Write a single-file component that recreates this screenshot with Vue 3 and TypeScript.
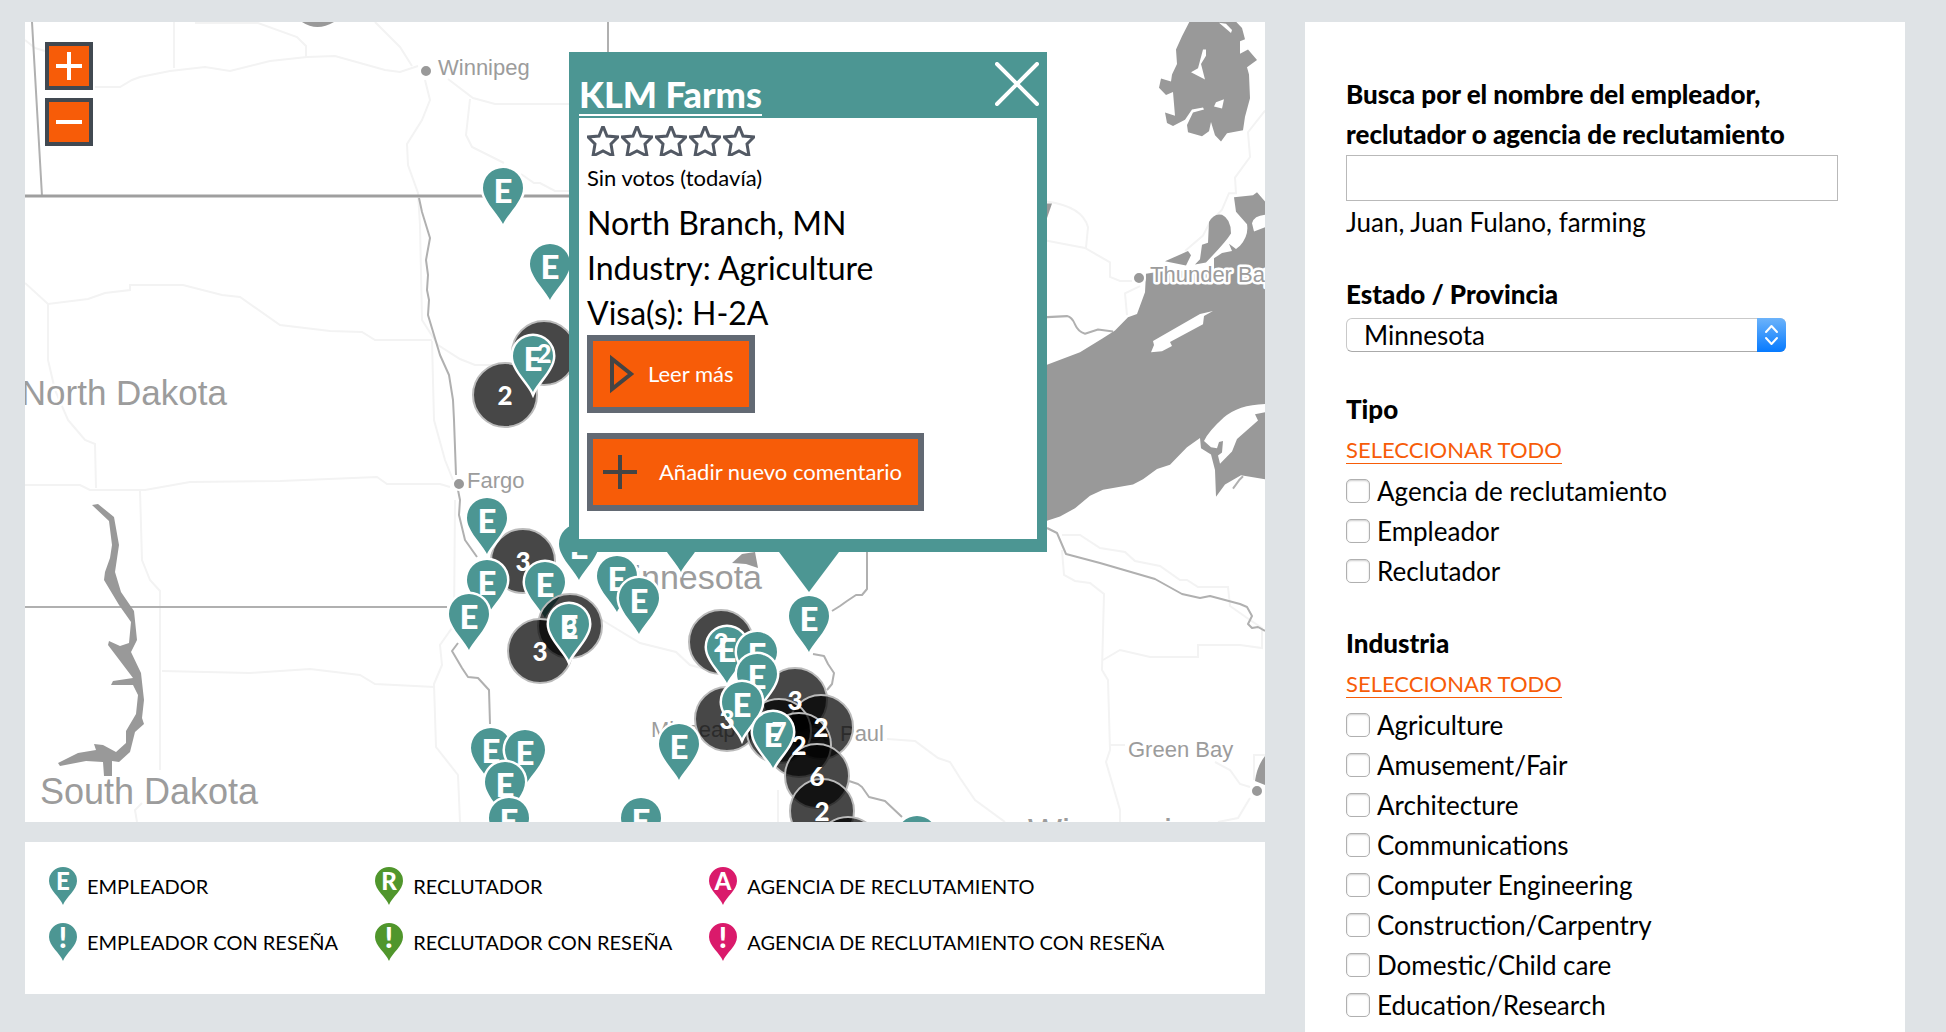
<script setup lang="ts">
import { ref } from 'vue'

interface Pin { kind: 'pin'; x: number; y: number }
interface Cluster { kind: 'cluster'; x: number; y: number; n: number; under?: boolean }
type Marker = Pin | Cluster

const pin = (x: number, y: number): Pin => ({ kind: 'pin', x, y })
const cluster = (x: number, y: number, n: number, under = false): Cluster => ({ kind: 'cluster', x, y, n, under })

// Markers are listed back to front; cluster counts lie over all of them unless marked as under.
const markers: Marker[] = [
  pin(503, 224),
  pin(550, 300),
  cluster(544, 353, 2),
  cluster(505, 395, 2),
  pin(533, 392),
  cluster(523, 561, 3, true),
  pin(487, 554),
  pin(681, 572),
  pin(579, 580),
  pin(617, 612),
  pin(487, 616),
  pin(545, 618),
  cluster(570, 626, 3),
  pin(639, 634),
  pin(469, 650),
  pin(809, 652),
  cluster(540, 651, 3),
  pin(569, 660),
  cluster(721, 642, 2),
  pin(727, 683),
  pin(757, 688),
  cluster(795, 700, 3),
  pin(757, 710),
  cluster(727, 719, 3),
  cluster(821, 727, 2),
  cluster(779, 731, 7),
  pin(742, 738),
  cluster(799, 745, 2),
  pin(773, 768),
  cluster(817, 776, 6),
  pin(679, 780),
  pin(491, 784),
  pin(525, 786),
  cluster(822, 811, 2),
  pin(505, 818),
  cluster(848, 849, 4),
  pin(509, 854),
  pin(641, 854),
  pin(917, 872),
]
const overLabels = markers.filter((m): m is Cluster => m.kind === 'cluster' && !m.under)

const roads: string[] = [
  'M174 22V68M25 40L35 48 45 51',
  'M95 87H120L132 80 140 77 170 71 205 67 230 71 270 61 307 57 335 56 385 70 400 72 418 66',
  'M195 23H258L297 37 306 46V57M375 22L400 47 412 66',
  'M448 79L473 98 495 104H569M470 99L466 135 472 147 504 163',
  'M521 174L534 183 540 183 555 191H569',
  'M425 80L430 100 422 120 407 144 408 165 418 193 420 225 422 320 438 345 460 359 475 365H500',
  'M25 283L48 304 88 299 105 293 130 290V285H183L222 295 240 297 280 325 330 331 362 332 375 340H432',
  'M48 304V360L55 390 68 420 85 440 95 444 96 488',
  'M25 485H80L90 490H145L190 482 280 481 377 477 387 484H440L450 487',
  'M140 490L142 560 150 580 160 591V770M162 671L250 673 310 669 360 675 375 684 435 687',
  'M432 341L434 420 445 460 453 480M455 500L454 625 440 645 442 665 434 684 436 747 458 775 460 822',
  'M142 803L135 810 137 822',
  'M602 620L640 643 676 652 690 665 720 673',
  'M778 790V822',
  'M1062 535H1080L1100 548 1125 552 1135 561 1160 566 1180 580H1187L1198 587H1228L1230 606 1250 620 1262 628V648L1240 645H1198V657H1150L1120 650 1103 660',
  'M1062 550L1064 575 1075 581 1090 583 1104 594 1102 670 1108 680 1110 750 1106 762 1120 810V822M1110 745H1125',
  'M887 739L915 741 938 758 950 762 960 778 975 800 1005 822',
  'M1215 762L1230 770 1240 784 1250 787M1250 798L1238 818 1218 822M1254 780V755H1265',
]
const ontarioRoads: string[] = [
  'M1265 107L1248 128 1250 152 1235 172 1236 187H1229L1222 203 1210 215 1203 228 1185 243',
  'M1047 195Q1083 200 1088 220L1086 240M1047 233L1085 240 1110 254V268L1120 272H1132M1140 277L1125 284 1127 305',
]
const borders: string[] = [
  'M32 22L42 196M608 22V60',
  'M419 198L422 212 430 238 426 260 428 275 427 290 429 300 428 315 434 335 440 355 449 375 453 400 454 420 456 475',
  'M458 490L460 500 459 515 465 540 477 557',
  'M25 607H447',
  'M458 643L452 651 462 668 468 677 478 678 489 690 490 724',
  'M867 552V589L862 595 856 595 847 601 840 606 832 611',
  'M813 654L824 656 828 664 834 673 832 684 827 690',
  'M849 781L858 784 862 787 869 797 885 801 902 817',
  'M1047 528L1057 533 1066 554 1100 563 1155 579 1182 594 1200 598 1210 596 1240 604 1247 607 1252 616 1248 624 1252 628 1258 627 1265 631',
]

interface PlaceLabel { text: string; x: number; y: number; size: number; anchor?: 'start' | 'end' }
const places: PlaceLabel[] = [
  { text: 'Winnipeg', x: 438, y: 75, size: 22 },
  { text: 'Fargo', x: 467, y: 488, size: 22 },
  { text: 'Thunder Bay', x: 1150, y: 282, size: 22 },
  { text: 'Green Bay', x: 1128, y: 757, size: 22 },
  { text: 'Minneapolis', x: 651, y: 737, size: 22 },
  { text: 'St. Paul', x: 884, y: 741, size: 22, anchor: 'end' },
  { text: 'North Dakota', x: 227, y: 405, size: 35, anchor: 'end' },
  { text: 'South Dakota', x: 40, y: 804, size: 36 },
  { text: 'Minnesota', x: 762, y: 589, size: 34, anchor: 'end' },
  { text: 'Wisconsin', x: 1028, y: 845, size: 36 },
]
const towns = [[426, 71], [459, 484], [1139, 278], [1257, 791]]

const legend = [
  { letter: 'E', color: '#4c9693', text: 'Empleador' },
  { letter: 'R', color: '#50962c', text: 'Reclutador' },
  { letter: 'A', color: '#da1a6b', text: 'Agencia de reclutamiento' },
]

const name = ref('')
const state = ref('Minnesota')
const states = ['Minnesota', 'North Dakota', 'South Dakota', 'Wisconsin']
const groups = [
  { title: 'Tipo', options: ['Agencia de reclutamiento', 'Empleador', 'Reclutador'] },
  {
    title: 'Industria',
    options: ['Agriculture', 'Amusement/Fair', 'Architecture', 'Communications', 'Computer Engineering',
      'Construction/Carpentry', 'Domestic/Child care', 'Education/Research'],
  },
]
const checked = ref<string[]>([])
function selectAll(options: string[]) {
  checked.value = [...new Set([...checked.value, ...options])]
}
const popupOpen = ref(true)
</script>

<template>
  <div class="page">
    <main class="main">
      <section class="map">
        <svg class="tiles" viewBox="25 22 1240 800" role="img" aria-label="Mapa de empleadores">
          <path v-for="(d, i) in roads" :key="'r' + i" class="road" :d="d" />
          <path v-for="(d, i) in borders" :key="'b' + i" class="border" :d="d" />
          <path class="border-wide" d="M25 196H569" />
          <g class="water">
            <path d="M302 22Q317 32 334 22Z" />
            <path d="M1265 756Q1257 766 1255 781L1265 785Z" />
            <path d="M732 563L742 554 755 552 758 568 746 564Z" />
            <path d="M92 505L98 504 114 517 119 545 115 572 121 592 134 611 137 640 131 652 141 673 144 700 142 718 144 724 135 732 130 752 119 762 112 761 112 776H104L103 762 86 761 60 766 58 763 78 753 96 750 94 744 103 745 116 752 126 743 126 731 136 714 138 695 133 685 111 685 113 681 133 678 108 645 109 641 120 646 129 643 131 622 119 605 104 580 105 572 110 558 112 545 109 521Z" />
          </g>
          <!-- Ontario and Lake Superior -->
          <g transform="scale(1 1.033)">
            <path v-for="(d, i) in ontarioRoads" :key="'o' + i" class="road" :d="d" />
            <path class="border" d="M1047 307L1067 306Q1072 307 1075 314T1085 323L1098 319 1113 321" />
            <g class="water">
              <path d="M1047 197H1052L1047 211Z" />
              <path d="M1190 20L1182 35 1176 48 1177 62 1172 72 1171 79 1161 76 1159 85 1166 92 1173 89 1175 112 1165 109 1167 119 1173 122 1185 116 1192 106 1203 104 1204 106 1193 109 1187 121 1188 128 1202 132 1209 127 1211 118 1215 131 1221 137 1227 129 1243 126 1245 113 1250 95 1249 72 1247 65 1257 58 1248 48 1240 52V40L1245 38 1242 27 1235 20Z" />
              <path d="M1165 253L1188 243 1191 247 1186 257Z" />
              <path d="M1195 256L1200 251 1202 237 1208 235 1209 215Q1214 206 1222 208 1231 212 1231 226 1226 234 1206 254Z" />
              <path d="M1214 250L1222 245 1232 243 1229 236 1236 241 1240 238Q1249 228 1247 217L1236 205 1234 191 1253 189 1257 186 1265 195V208Q1254 209 1252 216L1254 224 1265 220V391Q1238 392 1224 404 1208 418 1204 427L1211 433 1217 434 1219 428 1223 427 1222 438 1218 441 1220 449 1232 437 1237 425 1258 407 1255 401 1265 399V464L1241 460 1225 469 1216 481 1215 455 1211 440 1201 434 1200 424 1187 433 1177 443 1170 450 1157 454 1143 464 1133 469 1103 474 1090 480 1075 492 1060 500 1047 504V353L1080 341 1102 328 1115 320 1128 307 1137 304 1145 283 1146 265 1165 262H1214Z" />
            </g>
            <g class="land">
              <path d="M1151 341L1162 340 1172 335 1170 331 1203 314 1204 306 1213 301 1200 304 1153 330 1154 334Z" />
              <path d="M1203 48H1206V54L1201 62 1205 77 1191 70 1198 66Z" />
              <path d="M1216 99L1224 96 1222 105 1214 103Z" />
              <path d="M1219 22L1231 32 1232 29 1226 23Z" />
            </g>
            <path class="border" d="M1233 473L1239 465 1243 461" />
          </g>
          <circle v-for="([x, y], i) in towns" :key="'t' + i" class="town" :cx="x" :cy="y" r="6" />
          <text v-for="p in places" :key="p.text" class="place" :x="p.x" :y="p.y" :font-size="p.size"
            :text-anchor="p.anchor ?? 'start'">{{ p.text }}</text>
          <g v-for="(m, i) in markers" :key="'m' + i" :transform="`translate(${m.x} ${m.y})`">
            <template v-if="m.kind === 'pin'">
              <path class="pin" d="M0 0C-4 -9 -20 -23 -20 -36A20 20 0 0 1 20 -36C20 -23 4 -9 0 0Z" />
              <text class="pin-letter" y="-21">E</text>
            </template>
            <template v-else>
              <circle class="cluster" r="32" />
              <text v-if="m.under" class="count" y="10">{{ m.n }}</text>
            </template>
          </g>
          <text v-for="(m, i) in overLabels" :key="'c' + i" class="count" :x="m.x" :y="m.y + 10">{{ m.n }}</text>
        </svg>

        <div class="zoom">
          <button type="button" aria-label="Acercar">
            <svg viewBox="0 0 40 40"><path d="M7 20H33M20 6V34" /></svg>
          </button>
          <button type="button" aria-label="Alejar">
            <svg viewBox="0 0 40 40"><path d="M7 20H33" /></svg>
          </button>
        </div>

        <article v-if="popupOpen" class="popup">
          <header class="popup-head">
            <a href="#" class="popup-title">KLM Farms</a>
            <button type="button" class="close" aria-label="Cerrar" @click="popupOpen = false">
              <svg viewBox="0 0 44 44"><path d="M2 2L42 42M42 2L2 42" /></svg>
            </button>
          </header>
          <div class="popup-body">
            <div class="stars">
              <svg v-for="s in 5" :key="s" viewBox="0 0 32 30">
                <path d="M16 0L20 10 31 11 24 18 26 30 16 25 6 30 8 18 1 11 12 10Z" />
              </svg>
            </div>
            <p class="votes">Sin votos (todavía)</p>
            <p class="fact">North Branch, MN</p>
            <p class="fact">Industry: Agriculture</p>
            <p class="fact">Visa(s): H-2A</p>
            <div class="actions">
              <a href="#" class="action more">
                <svg viewBox="0 0 26 40"><path d="M3 5V35L22 20Z" /></svg>
                Leer más
              </a>
              <a href="#" class="action add">
                <svg viewBox="0 0 34 34"><path d="M0 17H34M17 0V34" /></svg>
                Añadir nuevo comentario
              </a>
            </div>
          </div>
        </article>
      </section>

      <section class="legend">
        <div v-for="l in legend" :key="l.letter" class="legend-col">
          <div v-for="mark in [l.letter, '!']" :key="mark" class="legend-item">
            <svg viewBox="0 0 28 38">
              <path :fill="l.color" d="M14 38C11 30 0 23 0 14A14 14 0 0 1 28 14C28 23 17 30 14 38Z" />
              <text x="14" :y="mark === '!' ? 25 : 23" :font-size="mark === '!' ? 29 : 24">{{ mark }}</text>
            </svg>
            <span>{{ l.text }}{{ mark === '!' ? ' con reseña' : '' }}</span>
          </div>
        </div>
      </section>
    </main>

    <aside class="filters">
      <form @submit.prevent>
        <div class="field">
          <label class="title" for="name">Busca por el nombre del empleador, reclutador o agencia de reclutamiento</label>
          <input id="name" v-model="name" class="text-input" type="text" />
          <p class="hint">Juan, Juan Fulano, farming</p>
        </div>
        <div class="field">
          <label class="title" for="state">Estado / Provincia</label>
          <div class="select">
            <select id="state" v-model="state">
              <option v-for="s in states" :key="s">{{ s }}</option>
            </select>
            <span class="arrows"><svg viewBox="0 0 29 34"><path d="M9 14L14.500 8 20 14M9 20L14.500 26 20 20" /></svg></span>
          </div>
        </div>
        <fieldset v-for="g in groups" :key="g.title" class="field">
          <legend class="title">{{ g.title }}</legend>
          <div class="all"><a href="#" @click.prevent="selectAll(g.options)">Seleccionar todo</a></div>
          <label v-for="o in g.options" :key="o" class="check">
            <input v-model="checked" type="checkbox" :value="o" />{{ o }}
          </label>
        </fieldset>
      </form>
    </aside>
  </div>
</template>

<style>
body {
  background: #dfe3e6;
}
</style>

<style scoped>
.page {
  box-sizing: border-box;
  min-height: 100vh;
  padding: 22px 41px 0 25px;
  display: grid;
  grid-template-columns: 31fr 15fr;
  gap: 40px;
  font-family: Lato, "Open Sans", sans-serif;
  font-size: 26px;
  line-height: 40px;
  color: #000;
}
p { margin: 0; }
.main {
  display: flex;
  flex-direction: column;
  gap: 20px;
  min-width: 0;
}
.map {
  position: relative;
  overflow: hidden;
  background: #fff;
}
.tiles {
  display: block;
  width: 100%;
}
.road { fill: none; stroke: #f3f3f3; stroke-width: 2; }
.border { fill: none; stroke: #b0b0b0; stroke-width: 2; stroke-linejoin: round; }
.border-wide { stroke: #9f9f9f; stroke-width: 3; }
.water { fill: #999; }
.land { fill: #fff; }
.town { fill: #999; stroke: #fff; stroke-width: 2; }
.place {
  font-family: "Liberation Sans", Arial, sans-serif;
  fill: #9c9c9c;
  stroke: #fff;
  stroke-width: 5;
  stroke-linejoin: round;
  paint-order: stroke;
}
.pin { fill: #4c9693; stroke: #fff; stroke-width: 5; paint-order: stroke; }
.pin-letter { font-size: 33px; font-weight: 900; fill: #fff; text-anchor: middle; }
.cluster { fill: rgba(0, 0, 0, 0.72); stroke: #bbb; stroke-width: 2; }
.count { font-size: 26px; font-weight: 900; fill: #fff; text-anchor: middle; }

.zoom {
  position: absolute;
  left: 20px;
  top: 20px;
  display: flex;
  flex-direction: column;
  gap: 8px;
}
.zoom button {
  width: 48px;
  height: 48px;
  padding: 0;
  border: 4px solid #414951;
  background: #f75c08;
}
.zoom svg { display: block; width: 40px; height: 40px; }
.zoom path { stroke: #fff; stroke-width: 4; }

.popup {
  position: absolute;
  left: 544px;
  top: 30px;
  box-sizing: border-box;
  width: 478px;
  padding: 0 10px 13px;
  background: #4c9693;
}
.popup::after {
  content: "";
  position: absolute;
  left: 210px;
  top: 100%;
  border: solid transparent;
  border-width: 40px 30px 0;
  border-top-color: #4c9693;
}
.popup-head {
  display: flex;
  justify-content: space-between;
  align-items: flex-end;
  height: 66px;
}
.popup-title {
  margin-bottom: 2px;
  border-bottom: 2px solid #fff;
  color: #fff;
  font-size: 36px;
  font-weight: 900;
  line-height: 40px;
  text-decoration: none;
}
.close {
  align-self: flex-start;
  margin: 10px -2px 0 0;
  padding: 0;
  border: 0;
  background: none;
}
.close svg { display: block; width: 44px; height: 44px; }
.close path { stroke: #fff; stroke-width: 4; stroke-linecap: round; }
.popup-body {
  padding: 8px 8px 28px;
  background: #fff;
}
.stars { display: flex; gap: 2px; }
.stars svg { width: 32px; height: 30px; }
.stars path { fill: #fff; stroke: #525964; stroke-width: 3; }
.votes { margin: 6px 0; font-size: 22px; line-height: 32px; }
.fact { font-size: 32px; line-height: 45px; }
.actions {
  display: flex;
  flex-direction: column;
  align-items: flex-start;
  gap: 20px;
}
.action {
  box-sizing: border-box;
  display: flex;
  align-items: center;
  height: 78px;
  border: 6px solid #626973;
  background: #f75c08;
  color: #fff;
  font-size: 22px;
  text-decoration: none;
}
.action path { fill: none; stroke: #444; stroke-width: 4; }
.more { padding: 0 16px; gap: 13px; }
.more svg { width: 26px; height: 40px; }
.add { padding: 0 16px 0 10px; gap: 22px; }
.add svg { width: 34px; height: 34px; }

.legend {
  display: flex;
  gap: 37px;
  padding: 18px 24px 27px;
  background: #fff;
  font-size: 20px;
  text-transform: uppercase;
}
.legend-col { display: flex; flex-direction: column; gap: 5px; }
.legend-item {
  display: flex;
  align-items: center;
  gap: 10px;
  height: 51px;
  line-height: 24px;
  white-space: nowrap;
}
.legend-item svg { width: 28px; height: 38px; }
.legend-item text { fill: #fff; font-weight: 900; text-anchor: middle; }

.filters {
  padding: 52px 67px 0 41px;
  background: #fff;
}
.filters form {
  display: flex;
  flex-direction: column;
  gap: 32px;
}
.field { min-width: 0; margin: 0; padding: 0; border: 0; }
.title { display: block; padding: 0; font-weight: 900; }
.text-input {
  box-sizing: border-box;
  display: block;
  width: 100%;
  height: 46px;
  margin: 1px 0;
  padding: 0 10px;
  border: 1px solid #b9b9b9;
  font: inherit;
}
.select {
  position: relative;
  width: 440px;
  max-width: 100%;
  margin: 4px 0 5px;
}
.select select {
  appearance: none;
  display: block;
  width: 100%;
  height: 34px;
  padding: 0 40px 0 17px;
  border: 1px solid #c9c9c9;
  border-bottom-color: #aaa;
  border-radius: 6px;
  background: #fff;
  color: #000;
  font: inherit;
  line-height: 32px;
}
.arrows {
  position: absolute;
  right: 0;
  top: 0;
  width: 29px;
  height: 34px;
  border-radius: 0 6px 6px 0;
  background: linear-gradient(#6cb3fa, #067aff);
  pointer-events: none;
}
.arrows svg { display: block; }
.arrows path { fill: none; stroke: #fff; stroke-width: 2; stroke-linecap: round; stroke-linejoin: round; }
.all { font-size: 22px; line-height: 42px; text-transform: uppercase; }
.all a { border-bottom: 1px solid #f75c08; color: #f75c08; text-decoration: none; }
.check { display: flex; align-items: center; gap: 7px; height: 40px; }
.check input {
  appearance: none;
  width: 24px;
  height: 24px;
  margin: 0;
  border: 1px solid #b0b0b0;
  border-radius: 5px;
  background: #fff;
  box-shadow: inset 0 1px 2px rgba(0, 0, 0, 0.2);
}
.check input:checked { background: #067aff; }
</style>
